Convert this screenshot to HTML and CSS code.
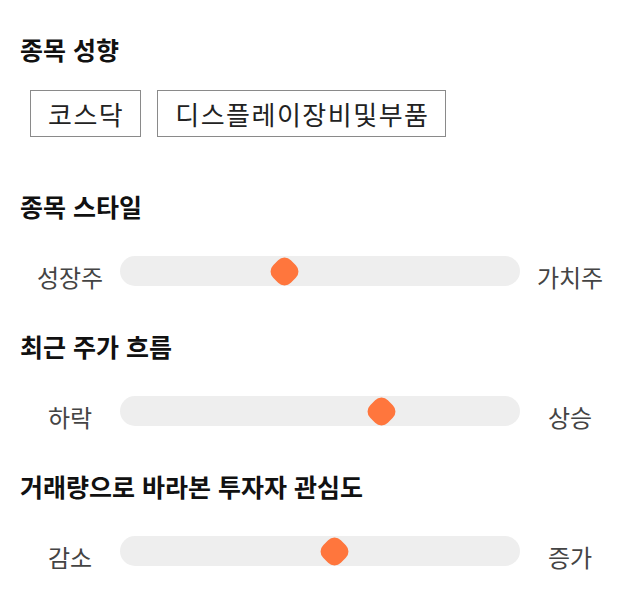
FILE: index.html
```html
<!DOCTYPE html>
<html lang="ko">
<head>
<meta charset="utf-8">
<link rel="stylesheet" href="styles.css">
</head>
<body>
<div class="page">
  <section class="section section-first">
    <h2 class="title">종목 성향</h2>
    <div class="chips">
      <span class="chip">코스닥</span>
      <span class="chip">디스플레이장비및부품</span>
    </div>
  </section>
  <section class="section">
    <h2 class="title">종목 스타일</h2>
    <div class="slider-row">
      <span class="label">성장주</span>
      <div class="track"><span class="thumb" style="left: 41.2%"></span></div>
      <span class="label">가치주</span>
    </div>
  </section>
  <section class="section">
    <h2 class="title">최근 주가 흐름</h2>
    <div class="slider-row">
      <span class="label">하락</span>
      <div class="track"><span class="thumb" style="left: 65.3%"></span></div>
      <span class="label">상승</span>
    </div>
  </section>
  <section class="section">
    <h2 class="title">거래량으로 바라본 투자자 관심도</h2>
    <div class="slider-row">
      <span class="label">감소</span>
      <div class="track"><span class="thumb" style="left: 53.5%"></span></div>
      <span class="label">증가</span>
    </div>
  </section>
</div>
</body>
</html>
```

FILE: styles.css
```css
html, body {
  margin: 0;
  padding: 0;
  background: #ffffff;
}
body {
  font-family: "Noto Sans CJK KR", "Noto Sans", sans-serif;
  color: #222;
}
.page {
  padding: 33px 20px 0 20px;
  display: flex;
  flex-direction: column;
}
.section {
  display: flex;
  flex-direction: column;
  margin-top: 32px;
}
.section-first {
  margin-top: 0;
}
.section-first + .section {
  margin-top: 53px;
}
.title {
  margin: 0;
  font-size: 25px;
  line-height: 33px;
  font-weight: 700;
  color: #111;
}
.chips {
  display: flex;
  gap: 16px;
  margin-top: 24px;
  padding-left: 10px;
}
.chip {
  border: 1px solid #8a8a8a;
  padding: 8px 16px 8px 17px;
  font-size: 26px;
  line-height: 29px;
  letter-spacing: 1.5px;
  color: #222;
}
.slider-row {
  display: flex;
  align-items: flex-start;
  margin-top: 33px;
}
.label {
  width: 100px;
  text-align: center;
  font-size: 24px;
  line-height: 42px;
  color: #444;
}
.track {
  position: relative;
  width: 400px;
  height: 30px;
  border-radius: 15px;
  background: #eeeeee;
}
.thumb {
  position: absolute;
  top: 50%;
  width: 25px;
  height: 25px;
  margin-left: -12.5px;
  margin-top: -12.5px;
  background: #ff763d;
  border-radius: 9px;
  transform: rotate(45deg);
}
```
